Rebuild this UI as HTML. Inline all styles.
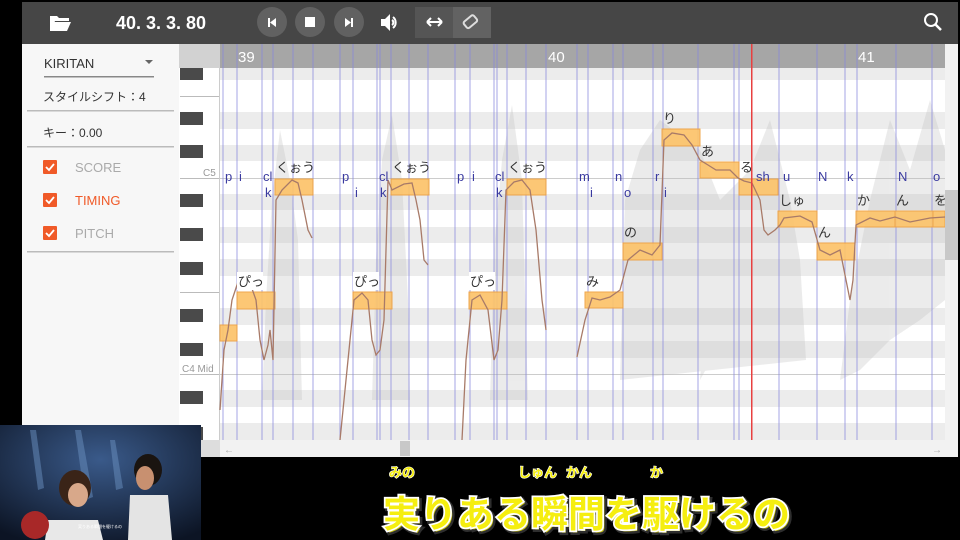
<!DOCTYPE html>
<html><head><meta charset="utf-8"><style>
html,body{margin:0;padding:0;background:#000;width:960px;height:540px;overflow:hidden}
svg{display:block}
text{font-family:"Liberation Sans","Noto Sans CJK JP",sans-serif}
</style></head><body>
<svg width="960" height="540" viewBox="0 0 960 540" xmlns="http://www.w3.org/2000/svg">
<rect width="960" height="540" fill="#000"/>
<rect x="22" y="2" width="936" height="42" fill="#464646"/>
<path d="M50 16h7l2 2h10v3H55l-4 10h-1z" fill="#fff"/>
<path d="M54 22h17l-4 9H50z" fill="#fff"/>
<text x="116" y="29" fill="#fff" font-size="18" font-weight="bold">40. 3. 3. 80</text>
<circle cx="272" cy="22" r="15" fill="#616161"/>
<circle cx="310" cy="22" r="15" fill="#616161"/>
<circle cx="349" cy="22" r="15" fill="#616161"/>
<rect x="268" y="18" width="2" height="9" fill="#fff"/><path d="M276 18v9l-6-4.5z" fill="#fff"/>
<rect x="305" y="17" width="10" height="10" fill="#fff"/>
<path d="M345 18v9l6-4.5z" fill="#fff"/><rect x="351" y="18" width="2" height="9" fill="#fff"/>
<path d="M381 19h4l5-5v17l-5-5h-4z" fill="#fff"/><path d="M393 17a7 7 0 0 1 0 11" stroke="#fff" stroke-width="2" fill="none"/><path d="M392 20a3 3 0 0 1 0 5" stroke="#fff" stroke-width="2" fill="none"/>
<rect x="415" y="7" width="38" height="31" fill="#555"/>
<rect x="453" y="7" width="38" height="31" fill="#626262"/>
<path d="M427 22h15M427 22l4-4M427 22l4 4M442 22l-4-4M442 22l-4 4" stroke="#fff" stroke-width="2" fill="none"/>
<rect x="464" y="18" width="13" height="8" rx="2" transform="rotate(-40 470 22)" fill="none" stroke="#ddd" stroke-width="2"/>
<circle cx="931" cy="20" r="6" stroke="#fff" stroke-width="2" fill="none"/><path d="M935 24l6 6" stroke="#fff" stroke-width="2.5"/>
<rect x="22" y="44" width="157" height="413" fill="#f7f7f7"/>
<text x="44" y="68" font-size="13" fill="#333">KIRITAN</text>
<path d="M145 60h8l-4 4z" fill="#666"/>
<rect x="44" y="76" width="110" height="1.5" fill="#888"/>
<text x="43" y="101" font-size="12" fill="#333">スタイルシフト：4</text>
<rect x="27" y="110" width="147" height="1.5" fill="#bbb"/>
<text x="43" y="137" font-size="12" fill="#333">キー：0.00</text>
<rect x="27" y="146" width="147" height="1.5" fill="#bbb"/>
<g fill="#f05a28"><rect x="43" y="160" width="14" height="14" rx="1"/><rect x="43" y="193" width="14" height="14" rx="1"/><rect x="43" y="226" width="14" height="14" rx="1"/></g>
<g stroke="#fff" stroke-width="1.8" fill="none"><path d="M46 167l3 3 5-6"/><path d="M46 200l3 3 5-6"/><path d="M46 233l3 3 5-6"/></g>
<text x="75" y="172" font-size="13" fill="#aaa">SCORE</text>
<text x="75" y="205" font-size="13" fill="#f05a28">TIMING</text>
<text x="75" y="238" font-size="13" fill="#aaa">PITCH</text>
<rect x="27" y="251" width="147" height="1.5" fill="#bbb"/>
<rect x="179" y="44" width="779" height="413" fill="#fff"/>
<g fill="#ececec">
<rect x="220" y="63" width="725" height="17"/>
<rect x="220" y="112" width="725" height="17"/>
<rect x="220" y="145" width="725" height="16"/>
<rect x="220" y="194" width="725" height="16"/>
<rect x="220" y="227" width="725" height="16"/>
<rect x="220" y="259" width="725" height="17"/>
<rect x="220" y="308" width="725" height="17"/>
<rect x="220" y="341" width="725" height="17"/>
<rect x="220" y="390" width="725" height="17"/>
<rect x="220" y="423" width="725" height="17"/>
</g>
<rect x="220" y="178" width="725" height="1" fill="#ccc"/>
<rect x="220" y="374" width="725" height="1" fill="#ccc"/>
<g fill="#bbb" opacity="0.28">
<path d="M262 400L266 300 272 200 280 130 290 180 298 240 302 400z"/>
<path d="M372 400L376 260 382 160 392 115 402 180 408 300 410 400z"/>
<path d="M490 400L494 250 502 160 512 105 522 180 526 330 528 400z"/>
<path d="M620 380L625 200 640 150 660 120 700 150 720 200 750 170 770 120 790 200 800 260 806 360z"/>
<path d="M840 380L850 300 870 200 890 120 910 170 930 100 945 150 945 300 920 320 890 340 860 370z"/>
<path d="M700 380L710 250 730 220 745 300z"/>
</g>
<rect x="179" y="68" width="41" height="372" fill="#fff"/>
<g fill="#4a4a4a">
<rect x="180" y="67" width="23" height="13"/><rect x="180" y="112" width="23" height="13"/><rect x="180" y="145" width="23" height="13"/>
<rect x="180" y="194" width="23" height="13"/><rect x="180" y="228" width="23" height="13"/><rect x="180" y="262" width="23" height="13"/>
<rect x="180" y="309" width="23" height="13"/><rect x="180" y="343" width="23" height="13"/><rect x="180" y="391" width="23" height="13"/><rect x="180" y="427" width="23" height="13"/>
</g>
<g fill="#bbb"><rect x="180" y="96" width="39" height="1"/><rect x="180" y="178" width="39" height="1"/><rect x="180" y="292" width="39" height="1"/><rect x="180" y="374" width="39" height="1"/></g>
<rect x="219" y="68" width="1" height="372" fill="#ccc"/>
<text x="203" y="176" font-size="10" fill="#999">C5</text>
<text x="182" y="372" font-size="10" fill="#999">C4 Mid</text>
<rect x="179" y="44" width="41" height="24" fill="#d2d2d2"/>
<rect x="220" y="44" width="725" height="24" fill="#a6a6a6"/>
<g stroke="#8888dd" stroke-width="1" opacity="0.75">
<path d="M223 44V440M237 44V440M262 44V440M273 44V440M293 44V440M313 44V440M340 44V440M353 44V440M377 44V440M380 44V440M391 44V440M409 44V440M428 44V440M455 44V440M470 44V440M494 44V440M497 44V440M507 44V440M526 44V440M546 44V440M577 44V440M588 44V440M613 44V440M623 44V440M653 44V440M663 44V440M698 44V440M734 44V440M739 44V440M779 44V440M817 44V440M845 44V440M857 44V440M896 44V440M932 44V440"/>
</g>
<text x="238" y="62" font-size="15" fill="#fff">39</text>
<text x="548" y="62" font-size="15" fill="#fff">40</text>
<text x="858" y="62" font-size="15" fill="#fff">41</text>
<g fill="#fcc36a" stroke="#eea040" stroke-width="1" opacity="0.92">
<rect x="220" y="325" width="17" height="16"/>
<rect x="237" y="292" width="38" height="17"/><rect x="353" y="292" width="39" height="17"/><rect x="469" y="292" width="38" height="17"/><rect x="585" y="292" width="38" height="16"/>
<rect x="275" y="179" width="38" height="16"/><rect x="391" y="179" width="38" height="16"/><rect x="507" y="179" width="39" height="16"/>
<rect x="623" y="243" width="39" height="17"/><rect x="662" y="129" width="38" height="17"/><rect x="700" y="162" width="39" height="16"/>
<rect x="739" y="179" width="39" height="16"/><rect x="778" y="211" width="39" height="16"/><rect x="817" y="243" width="38" height="17"/>
<rect x="856" y="211" width="39" height="16"/><rect x="895" y="211" width="38" height="16"/><rect x="933" y="211" width="12" height="16"/>
</g>
<g stroke="#a87a68" stroke-width="1.3" fill="none">
<path d="M220 410L224 350 228 330 232 300 238 282 250 283 256 300 260 340 264 360 268 345 270 330 273 360 276 200 282 190 292 180 298 183 302 200 308 230 312 238"/>
<path d="M340 440L346 380 350 340 354 300 362 293 368 300 372 340 376 355 380 350 384 320 388 180 392 190 404 184 412 183 416 200 420 220 424 260 428 265"/>
<path d="M462 440L466 360 472 300 480 295 488 310 494 360 498 350 502 300 506 190 514 182 522 180 530 190 536 230 542 300 546 330"/>
<path d="M577 357L585 320 592 298 600 300 610 297 620 290 628 260 640 250 652 255 660 245 664 140 672 133 684 135 692 145 700 160 708 165 716 170 730 170 738 178 744 181 748 182 752 183 760 200 764 230 768 235 775 230 780 225 784 218 800 216 812 222 820 250 830 255 840 250 850 300 853 280 856 225 870 218 880 221 895 217 910 222 930 218 945 217"/>
</g>
<g font-size="13" fill="#333">
<rect x="237" y="272" width="26" height="18" fill="#fff"/><text x="238" y="286">ぴっ</text>
<rect x="353" y="272" width="26" height="18" fill="#fff"/><text x="354" y="286">ぴっ</text>
<rect x="469" y="272" width="26" height="18" fill="#fff"/><text x="470" y="286">ぴっ</text>
<text x="586" y="286">み</text>
<text x="276" y="172">くぉう</text><text x="392" y="172">くぉう</text><text x="508" y="172">くぉう</text>
<text x="624" y="237">の</text><text x="663" y="123">り</text><text x="701" y="156">あ</text><text x="740" y="172">る</text>
<text x="779" y="205">しゅ</text><text x="818" y="237">ん</text><text x="857" y="205">か</text><text x="896" y="205">ん</text><text x="934" y="205">を</text>
</g>
<g font-size="13" fill="#3a3aa0">
<text x="225" y="181">p</text><text x="239" y="181">i</text><text x="263" y="181">cl</text><text x="265" y="197">k</text>
<text x="342" y="181">p</text><text x="355" y="197">i</text><text x="379" y="181">cl</text><text x="380" y="197">k</text>
<text x="457" y="181">p</text><text x="472" y="181">i</text><text x="495" y="181">cl</text><text x="496" y="197">k</text>
<text x="579" y="181">m</text><text x="590" y="197">i</text><text x="615" y="181">n</text><text x="624" y="197">o</text><text x="655" y="181">r</text><text x="664" y="197">i</text>
<text x="756" y="181">sh</text><text x="783" y="181">u</text><text x="818" y="181">N</text><text x="847" y="181">k</text><text x="898" y="181">N</text><text x="933" y="181">o</text>
</g>
<rect x="751" y="44" width="1.5" height="396" fill="#e84040"/>
<rect x="945" y="44" width="13" height="396" fill="#f2f2f2"/>
<rect x="945" y="190" width="13" height="70" fill="#c8c8c8"/>
<rect x="179" y="440" width="779" height="17" fill="#f2f2f2"/>
<rect x="179" y="440" width="41" height="17" fill="#ddd"/>
<rect x="400" y="441" width="10" height="15" fill="#c8c8c8"/>
<text x="224" y="453" font-size="10" fill="#aaa">←</text>
<text x="932" y="453" font-size="10" fill="#aaa">→</text>
<defs><radialGradient id="g" cx="0.5" cy="0.3" r="0.8"><stop offset="0" stop-color="#3a5a8a"/><stop offset="1" stop-color="#0c1424"/></radialGradient></defs>
<rect x="0" y="425" width="201" height="115" fill="url(#g)"/>
<g opacity="0.5" fill="#6a90c0"><path d="M30 430l8 60 6-2-8-58z"/><path d="M75 430l10 70 8-3-12-67z"/><path d="M110 440l6 50 7-2-8-48z"/></g>
<ellipse cx="75" cy="488" rx="16" ry="18" fill="#3a2418"/><ellipse cx="78" cy="495" rx="10" ry="12" fill="#d8a88a"/>
<path d="M48 520h50l5 20H45z" fill="#e8e8e8"/><ellipse cx="35" cy="525" rx="14" ry="14" fill="#a82828"/>
<ellipse cx="148" cy="470" rx="14" ry="16" fill="#1a1410"/><ellipse cx="145" cy="478" rx="9" ry="12" fill="#c89070"/>
<path d="M130 495h38l4 45h-44z" fill="#e4e4e4"/>
<text x="78" y="528" font-size="4" fill="#fff">実りある瞬間を駆けるの</text>
<g font-weight="bold" fill="#f5ee10" stroke="#fff" stroke-width="1.2" paint-order="stroke">
<text x="389" y="477" font-size="13">みの</text>
<text x="518" y="477" font-size="13">しゅん</text>
<text x="566" y="477" font-size="13">かん</text>
<text x="650" y="477" font-size="13">か</text>
</g>
<text x="383" y="527" font-size="37" font-weight="bold" fill="#f5ee10" stroke="#3a3a3a" stroke-width="5" paint-order="stroke" transform="translate(2,2)" opacity="0.8">実りある瞬間を駆けるの</text>
<text x="383" y="527" font-size="37" font-weight="bold" fill="#f5ee10" stroke="#fff" stroke-width="3.5" paint-order="stroke">実りある瞬間を駆けるの</text>
</svg>
</body></html>
